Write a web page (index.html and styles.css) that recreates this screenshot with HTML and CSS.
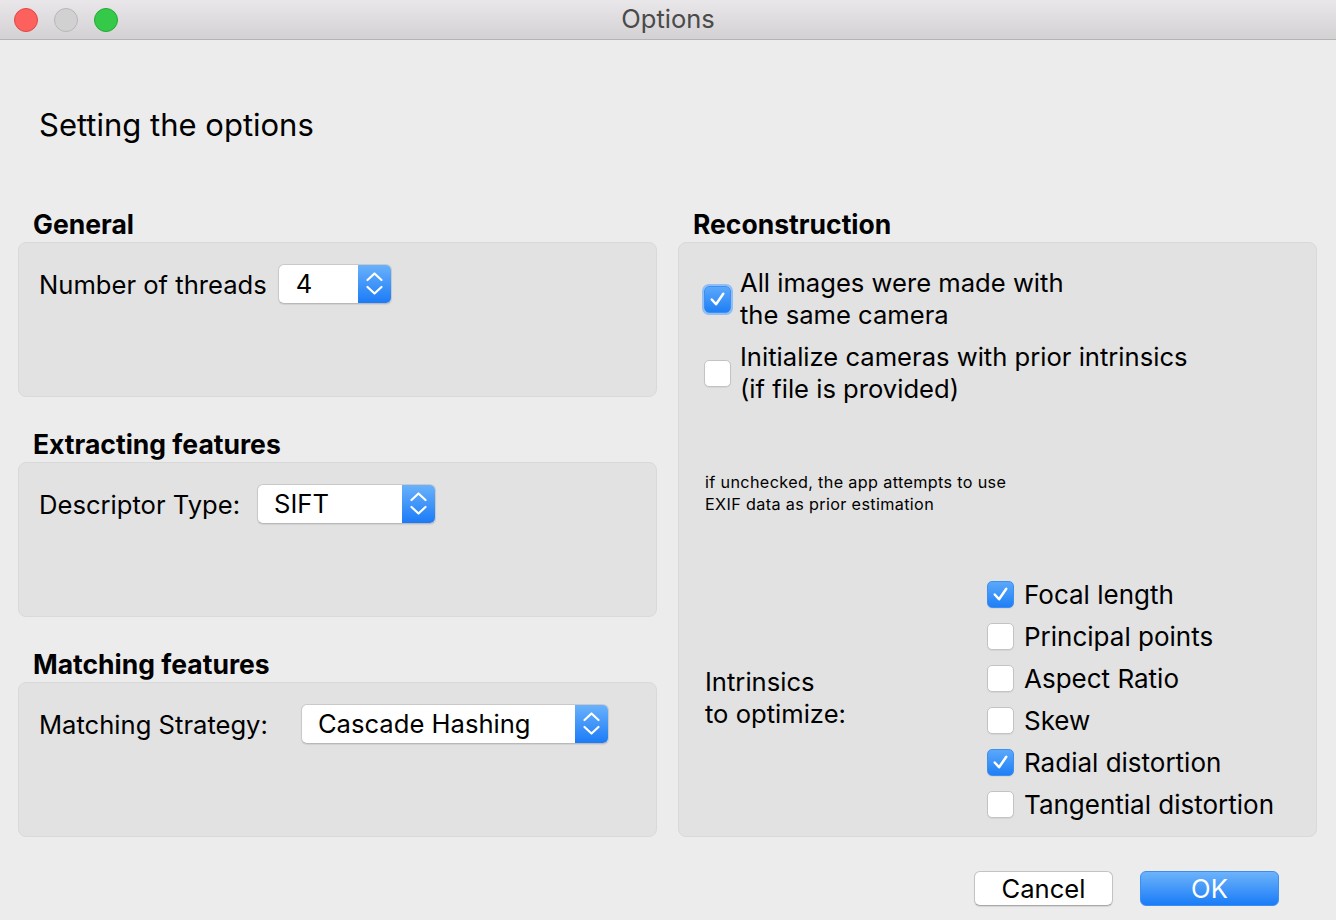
FILE: index.html
```html
<!DOCTYPE html>
<html>
<head>
<meta charset="utf-8">
<link rel="stylesheet" href="styles.css">
</head>
<body>
<div class="window">
  <div class="titlebar">
    <div class="lights">
      <span class="light red"></span>
      <span class="light gray"></span>
      <span class="light green"></span>
    </div>
    <div class="title">Options</div>
  </div>
  <div class="content">
    <h1 class="page-title">Setting the options</h1>
    <div class="columns">
      <div class="col">
        <section class="section">
          <h2 class="sec-head">General</h2>
          <div class="panel small-panel">
            <div class="row">
              <span class="label">Number of threads</span>
              <div class="spin gap-threads">
                <span class="field-text">4</span>
                <span class="stepper"><svg viewBox="0 0 33 39" width="33" height="39"><path d="M9.5 16 L16.5 9.5 L23.5 16 M9.5 23 L16.5 29.5 L23.5 23" fill="none" stroke="#fff" stroke-width="2.2" stroke-linecap="round" stroke-linejoin="round"/></svg></span>
              </div>
            </div>
          </div>
        </section>
        <section class="section">
          <h2 class="sec-head">Extracting features</h2>
          <div class="panel small-panel">
            <div class="row">
              <span class="label">Descriptor Type:</span>
              <div class="combo combo-desc">
                <span class="field-text">SIFT</span>
                <span class="stepper"><svg viewBox="0 0 33 39" width="33" height="39"><path d="M9.5 16 L16.5 9.5 L23.5 16 M9.5 23 L16.5 29.5 L23.5 23" fill="none" stroke="#fff" stroke-width="2.2" stroke-linecap="round" stroke-linejoin="round"/></svg></span>
              </div>
            </div>
          </div>
        </section>
        <section class="section">
          <h2 class="sec-head">Matching features</h2>
          <div class="panel small-panel">
            <div class="row">
              <span class="label">Matching Strategy:</span>
              <div class="combo combo-match">
                <span class="field-text">Cascade Hashing</span>
                <span class="stepper"><svg viewBox="0 0 33 39" width="33" height="39"><path d="M9.5 16 L16.5 9.5 L23.5 16 M9.5 23 L16.5 29.5 L23.5 23" fill="none" stroke="#fff" stroke-width="2.2" stroke-linecap="round" stroke-linejoin="round"/></svg></span>
              </div>
            </div>
          </div>
        </section>
      </div>
      <div class="col">
        <section class="section">
          <h2 class="sec-head">Reconstruction</h2>
          <div class="panel big-panel">
            <div class="check-block">
              <span class="box checked focused"><svg viewBox="0 0 26 26" width="26" height="26"><path d="M7 13.5 L11.5 18.5 L19 7.5" fill="none" stroke="#fff" stroke-width="2.6" stroke-linecap="round" stroke-linejoin="round"/></svg></span>
              <span class="check-text">All images were made with<br>the same camera</span>
            </div>
            <div class="check-block">
              <span class="box"></span>
              <span class="check-text">Initialize cameras with prior intrinsics<br>(if file is provided)</span>
            </div>
            <p class="hint">if unchecked, the app attempts to use<br>EXIF data as prior estimation</p>
            <div class="intrinsics">
              <span class="intr-label">Intrinsics<br>to optimize:</span>
              <ul class="checklist">
                <li><span class="box checked"><svg viewBox="0 0 26 26" width="26" height="26"><path d="M7 13.5 L11.5 18.5 L19 7.5" fill="none" stroke="#fff" stroke-width="2.6" stroke-linecap="round" stroke-linejoin="round"/></svg></span>Focal length</li>
                <li><span class="box"></span>Principal points</li>
                <li><span class="box"></span>Aspect Ratio</li>
                <li><span class="box"></span>Skew</li>
                <li><span class="box checked"><svg viewBox="0 0 26 26" width="26" height="26"><path d="M7 13.5 L11.5 18.5 L19 7.5" fill="none" stroke="#fff" stroke-width="2.6" stroke-linecap="round" stroke-linejoin="round"/></svg></span>Radial distortion</li>
                <li><span class="box"></span>Tangential distortion</li>
              </ul>
            </div>
          </div>
        </section>
      </div>
    </div>
    <div class="buttons">
      <button class="btn cancel">Cancel</button>
      <button class="btn ok">OK</button>
    </div>
  </div>
</div>
</body>
</html>
```

FILE: styles.css
```css
* { box-sizing: border-box; }
html, body { margin: 0; padding: 0; }
body {
  width: 1336px;
  height: 920px;
  background: #ececec;
  font-family: "Inter", "Liberation Sans", sans-serif;
  color: #000;
  overflow: hidden;
}
.window { width: 1336px; height: 920px; display: flex; flex-direction: column; }
.titlebar {
  height: 40px;
  flex: none;
  background: linear-gradient(#e9e7e9, #d3d1d3);
  border-bottom: 1px solid #b4b4b4;
  display: flex;
  align-items: center;
  position: relative;
}
.lights { display: flex; gap: 16px; padding-left: 14px; }
.light { width: 24px; height: 24px; border-radius: 50%; display: block; }
.light.red { background: #fc615d; border: 1px solid #df4744; }
.light.gray { background: #d1d1d1; border: 1px solid #b8b8b8; }
.light.green { background: #35c94a; border: 1px solid #24a933; }
.title {
  position: absolute;
  left: 0; right: 0; top: 0;
  line-height: 38px;
  text-align: center;
  font-size: 25.5px;
  color: #4a4a4a;
}
.content { flex: 1; display: flex; flex-direction: column; padding: 0 19px 0 18px; }
.page-title {
  margin: 65px 0 0 21px;
  font-size: 31px;
  font-weight: 400;
  line-height: 40px;
  height: 40px;
}
.columns { display: flex; gap: 21px; margin-top: 61px; }
.col { width: 639px; display: flex; flex-direction: column; }
.section + .section { margin-top: 29px; }
.sec-head {
  margin: 0 0 0 15px;
  font-size: 26.5px;
  font-weight: 700;
  line-height: 36px;
  height: 36px;
}
.panel {
  background: #e2e2e2;
  border: 1px solid #d9d9d9;
  border-radius: 8px;
}
.small-panel { height: 155px; padding: 21px 0 0 20px; }
.row { display: flex; align-items: center; height: 40px; }
.label { font-size: 25.6px; }
.spin, .combo {
  display: flex;
  height: 40px;
  background: #fff;
  border: 1px solid #c9c9c9;
  border-bottom-color: #b9b9b9;
  border-radius: 6px;
  overflow: hidden;
  box-shadow: 0 1px 1px rgba(0,0,0,0.08);
}
.gap-threads { margin-left: 11px; width: 114px; }
.combo-desc { margin-left: 17px; width: 179px; }
.combo-match { margin-left: 33px; width: 308px; }
.field-text { flex: 1; font-size: 25.6px; line-height: 38px; padding-left: 16px; }
.spin .field-text { padding-left: 17px; }
.stepper {
  width: 33px;
  flex: none;
  background: linear-gradient(#69b1fb, #1b7bf7);
  display: flex;
  align-items: center;
  justify-content: center;
}
.stepper svg { display: block; margin-top: -1px; }
.big-panel {
  height: 595px;
  padding: 24px 0 11px 25px;
  display: flex;
  flex-direction: column;
}
.check-block { display: flex; align-items: center; }
.check-block + .check-block { margin-top: 10px; }
.check-text { font-size: 25.6px; line-height: 32px; margin-left: 9px; }
.box {
  width: 27px; height: 27px;
  flex: none;
  border-radius: 5px;
  background: #fff;
  border: 1px solid #c3c3c3;
  box-shadow: 0 1px 1px rgba(0,0,0,0.06);
  display: flex; align-items: center; justify-content: center;
}
.box.checked {
  background: linear-gradient(#5ba8fb, #1f7ff6);
  border: 1px solid #3d8ff0;
}
.box.focused { box-shadow: 0 0 0 2px #8ebef5; }
.hint { margin: 66px 0 0 1px; font-size: 16.2px; line-height: 22px; letter-spacing: 0.35px; }
.intrinsics { margin-top: auto; display: flex; align-items: center; }
.intr-label { font-size: 25.6px; line-height: 32px; width: 283px; padding-left: 1px; flex: none; margin-top: -2px; }
.checklist { list-style: none; margin: 0; padding: 0; }
.checklist li { display: flex; align-items: center; height: 42px; font-size: 26px; }
.checklist .box { margin-right: 10px; }
.buttons { display: flex; justify-content: flex-end; gap: 27px; margin-top: 34px; padding-right: 38px; }
.btn {
  width: 139px; height: 35px;
  font-family: inherit;
  font-size: 25.6px;
  border-radius: 6px;
  padding: 0;
  line-height: 33px;
}
.cancel { background: #fff; border: 1px solid #c3c3c3; border-bottom-color: #aaa; color: #000; box-shadow: 0 1px 1px rgba(0,0,0,0.1); }
.ok { background: linear-gradient(#6db3fb, #1a7cf7); border: 1px solid #3c8ef3; color: #fff; }
```
